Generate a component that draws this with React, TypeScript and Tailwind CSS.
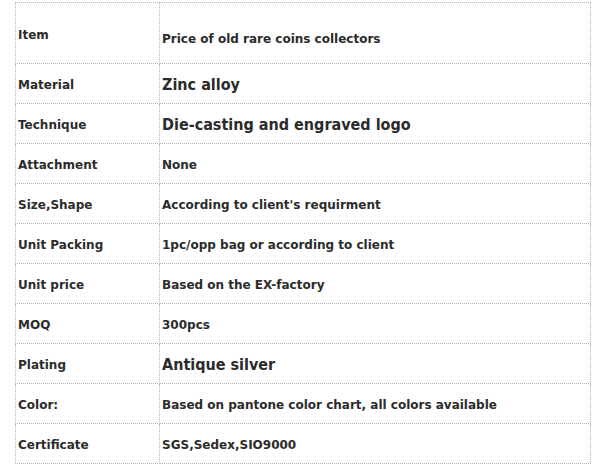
const rows: { label: string; value: string; big?: boolean; h?: string }[] = [
  { label: "Item", value: "Price of old rare coins collectors", h: "h-[61px]" },
  { label: "Material", value: "Zinc alloy", big: true },
  { label: "Technique", value: "Die-casting and engraved logo", big: true },
  { label: "Attachment", value: "None" },
  { label: "Size,Shape", value: "According to client's requirment" },
  { label: "Unit Packing", value: "1pc/opp bag or according to client" },
  { label: "Unit price", value: "Based on the EX-factory" },
  { label: "MOQ", value: "300pcs" },
  { label: "Plating", value: "Antique silver", big: true },
  { label: "Color:", value: "Based on pantone color chart, all colors available" },
  { label: "Certificate", value: "SGS,Sedex,SIO9000" },
];

export default function App() {
  return (
    <div className="bg-white min-h-screen pl-[15px] pt-[2px] font-['DejaVu_Sans',sans-serif] text-[#2b2b2b]">
      <table className="border-collapse w-[576px]">
        <tbody>
          {rows.map((r) => (
            <tr key={r.label} className={r.h ?? "h-[40px]"}>
              <td className="w-[144px] border border-dotted border-[#b5b5b5] px-[2px] pt-[3px] pb-0 align-middle text-[12px] font-bold">
                {r.label}
              </td>
              <td
                className={
                  "border border-dotted border-[#b5b5b5] px-[2px] align-middle " +
                  (r.big
                    ? "pt-[2px] text-[16px] font-bold font-['DejaVu_Sans_Condensed',sans-serif]"
                    : "pt-[3px] text-[12px] font-bold")
                }
              >
                <span className={r.label === "Item" ? "relative top-[4px]" : ""}>{r.value}</span>
              </td>
            </tr>
          ))}
        </tbody>
      </table>
    </div>
  );
}
